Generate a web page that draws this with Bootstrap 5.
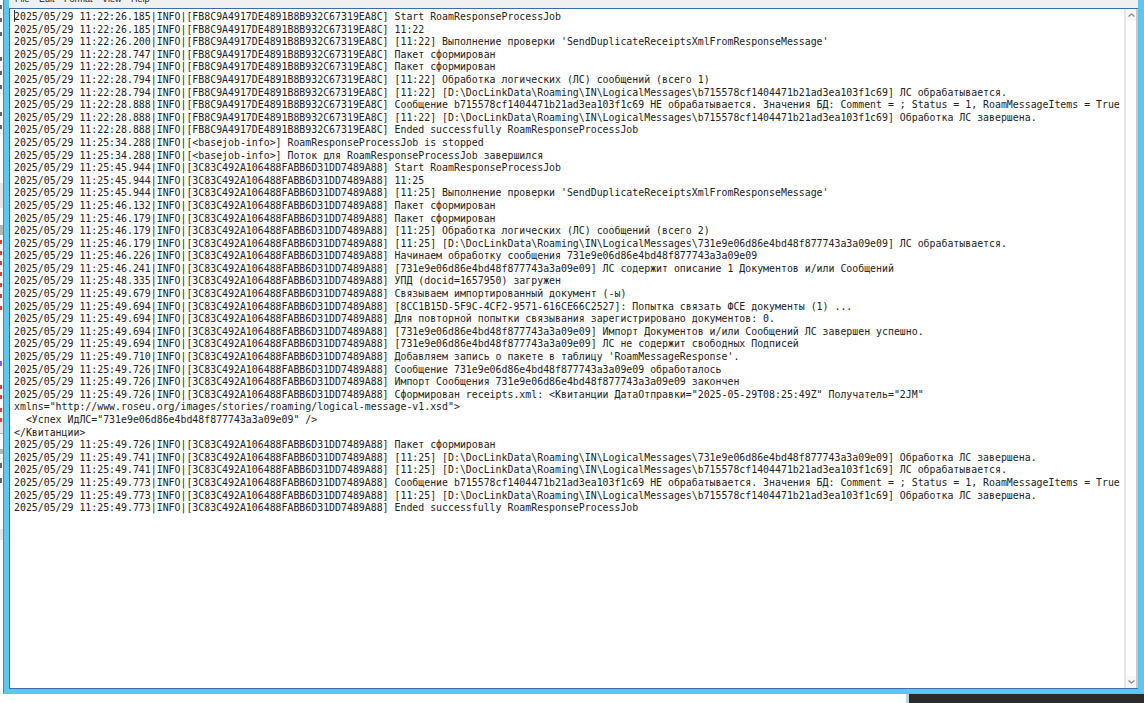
<!doctype html>
<html><head><meta charset="utf-8">
<link href="https://cdn.jsdelivr.net/npm/bootstrap@5.3.0/dist/css/bootstrap.min.css" rel="stylesheet">
<style>
html,body{height:703px;overflow:hidden;background:#fff}
.desk-shell{height:703px}
.frame-row{height:694px}
.behind-strip{width:3px;flex:none}
.note-frame{border-left:1px solid #7a7a7a;border-bottom:1px solid #a8a8a8;background:#5fc6ee;padding:0 6px 4px 5px;min-width:0}
.menu-strip{height:8px;flex:none;background:#f0f0f0;overflow:hidden;font:9px/9px "Liberation Sans",sans-serif;color:#222;padding-left:6px;gap:9.5px}
.menu-strip span{margin-top:-5px}
.edit-pane{border:1px solid #3a6ea5;border-right:0;background:#fff;min-height:0}
.log-text{font:9.9px/12.6px "DejaVu Sans Mono",monospace;color:#222;margin:0;padding:1px 0 0 4px;white-space:pre;overflow:hidden}
.caret-mark{display:inline-block;width:1px;height:12px;margin-right:-1px;background:#333;vertical-align:-2px}
.scroll-rail{width:14px;flex:none;background:#fdfdfd;border-left:2px solid #e6e6e6;border-right:2px solid #c8c8c8}
.scroll-btn{height:12px;background:#f6f6f6;color:#888}
.under-row{height:9px}
.dark-corner{width:238px;background:#2b2b2b;border-left:3px solid #b9d3da}
</style></head><body>
<div class="desk-shell d-flex flex-column">
<div class="frame-row d-flex">
<svg class="behind-strip" width="3" height="694" viewBox="0 0 3 694">
<g fill="#666"><rect y="5" width="2" height="4"/><rect y="18" width="2" height="4"/><rect y="32" width="2" height="4"/><rect y="57" width="2" height="4"/><rect y="71" width="2" height="4"/><rect y="85" width="2" height="4"/><rect y="112" width="2" height="4"/><rect y="125" width="2" height="4"/><rect y="463" width="2" height="5"/><rect y="478" width="2" height="5"/></g>
<g fill="#e8e8e8"><rect y="183" width="3" height="25"/><rect y="418" width="3" height="15"/><rect y="529" width="3" height="11"/></g>
<g fill="#b5b5b5"><rect y="225" width="3" height="10"/><rect y="433" width="3" height="1"/><rect y="449" width="3" height="5"/></g>
<g fill="#e0403a"><rect y="240" width="2" height="4"/><rect y="251" width="2" height="4"/><rect y="261" width="2" height="4"/><rect y="272" width="2" height="4"/><rect y="283" width="2" height="4"/><rect y="294" width="2" height="4"/><rect y="306" width="2" height="4"/><rect y="385" width="2" height="4"/><rect y="395" width="2" height="4"/><rect y="408" width="2" height="4"/><rect y="418" width="2" height="4"/></g>
<rect y="361" width="2" height="5" fill="#8a5ae0"/>
</svg>
<div class="note-frame d-flex flex-column flex-grow-1">
<div class="menu-strip d-flex"><span>File</span><span>Edit</span><span>Format</span><span>View</span><span>Help</span></div>
<div class="edit-pane d-flex flex-grow-1">
<pre class="log-text flex-grow-1"><span class="caret-mark"></span>2025/05/29 11:22:26.185|INFO|[FB8C9A4917DE4891B8B932C67319EA8C] Start RoamResponseProcessJob
2025/05/29 11:22:26.185|INFO|[FB8C9A4917DE4891B8B932C67319EA8C] 11:22
2025/05/29 11:22:26.200|INFO|[FB8C9A4917DE4891B8B932C67319EA8C] [11:22] Выполнение проверки 'SendDuplicateReceiptsXmlFromResponseMessage'
2025/05/29 11:22:28.747|INFO|[FB8C9A4917DE4891B8B932C67319EA8C] Пакет сформирован
2025/05/29 11:22:28.794|INFO|[FB8C9A4917DE4891B8B932C67319EA8C] Пакет сформирован
2025/05/29 11:22:28.794|INFO|[FB8C9A4917DE4891B8B932C67319EA8C] [11:22] Обработка логических (ЛС) сообщений (всего 1)
2025/05/29 11:22:28.794|INFO|[FB8C9A4917DE4891B8B932C67319EA8C] [11:22] [D:\DocLinkData\Roaming\IN\LogicalMessages\b715578cf1404471b21ad3ea103f1c69] ЛС обрабатывается.
2025/05/29 11:22:28.888|INFO|[FB8C9A4917DE4891B8B932C67319EA8C] Сообщение b715578cf1404471b21ad3ea103f1c69 НЕ обрабатывается. Значения БД: Comment = ; Status = 1, RoamMessageItems = True
2025/05/29 11:22:28.888|INFO|[FB8C9A4917DE4891B8B932C67319EA8C] [11:22] [D:\DocLinkData\Roaming\IN\LogicalMessages\b715578cf1404471b21ad3ea103f1c69] Обработка ЛС завершена.
2025/05/29 11:22:28.888|INFO|[FB8C9A4917DE4891B8B932C67319EA8C] Ended successfully RoamResponseProcessJob
2025/05/29 11:25:34.288|INFO|[&lt;basejob-info&gt;] RoamResponseProcessJob is stopped
2025/05/29 11:25:34.288|INFO|[&lt;basejob-info&gt;] Поток для RoamResponseProcessJob завершился
2025/05/29 11:25:45.944|INFO|[3C83C492A106488FABB6D31DD7489A88] Start RoamResponseProcessJob
2025/05/29 11:25:45.944|INFO|[3C83C492A106488FABB6D31DD7489A88] 11:25
2025/05/29 11:25:45.944|INFO|[3C83C492A106488FABB6D31DD7489A88] [11:25] Выполнение проверки 'SendDuplicateReceiptsXmlFromResponseMessage'
2025/05/29 11:25:46.132|INFO|[3C83C492A106488FABB6D31DD7489A88] Пакет сформирован
2025/05/29 11:25:46.179|INFO|[3C83C492A106488FABB6D31DD7489A88] Пакет сформирован
2025/05/29 11:25:46.179|INFO|[3C83C492A106488FABB6D31DD7489A88] [11:25] Обработка логических (ЛС) сообщений (всего 2)
2025/05/29 11:25:46.179|INFO|[3C83C492A106488FABB6D31DD7489A88] [11:25] [D:\DocLinkData\Roaming\IN\LogicalMessages\731e9e06d86e4bd48f877743a3a09e09] ЛС обрабатывается.
2025/05/29 11:25:46.226|INFO|[3C83C492A106488FABB6D31DD7489A88] Начинаем обработку сообщения 731e9e06d86e4bd48f877743a3a09e09
2025/05/29 11:25:46.241|INFO|[3C83C492A106488FABB6D31DD7489A88] [731e9e06d86e4bd48f877743a3a09e09] ЛС содержит описание 1 Документов и/или Сообщений
2025/05/29 11:25:48.335|INFO|[3C83C492A106488FABB6D31DD7489A88] УПД (docid=1657950) загружен
2025/05/29 11:25:49.679|INFO|[3C83C492A106488FABB6D31DD7489A88] Связываем импортированный документ (-ы)
2025/05/29 11:25:49.694|INFO|[3C83C492A106488FABB6D31DD7489A88] [8CC1B15D-5F9C-4CF2-9571-616CE66C2527]: Попытка связать ФСЕ документы (1) ...
2025/05/29 11:25:49.694|INFO|[3C83C492A106488FABB6D31DD7489A88] Для повторной попытки связывания зарегистрировано документов: 0.
2025/05/29 11:25:49.694|INFO|[3C83C492A106488FABB6D31DD7489A88] [731e9e06d86e4bd48f877743a3a09e09] Импорт Документов и/или Сообщений ЛС завершен успешно.
2025/05/29 11:25:49.694|INFO|[3C83C492A106488FABB6D31DD7489A88] [731e9e06d86e4bd48f877743a3a09e09] ЛС не содержит свободных Подписей
2025/05/29 11:25:49.710|INFO|[3C83C492A106488FABB6D31DD7489A88] Добавляем запись о пакете в таблицу 'RoamMessageResponse'.
2025/05/29 11:25:49.726|INFO|[3C83C492A106488FABB6D31DD7489A88] Сообщение 731e9e06d86e4bd48f877743a3a09e09 обработалось
2025/05/29 11:25:49.726|INFO|[3C83C492A106488FABB6D31DD7489A88] Импорт Сообщения 731e9e06d86e4bd48f877743a3a09e09 закончен
2025/05/29 11:25:49.726|INFO|[3C83C492A106488FABB6D31DD7489A88] Сформирован receipts.xml: &lt;Квитанции ДатаОтправки="2025-05-29T08:25:49Z" Получатель="2JM"
xmlns="http://www.roseu.org/images/stories/roaming/logical-message-v1.xsd"&gt;
  &lt;Успех ИдЛС="731e9e06d86e4bd48f877743a3a09e09" /&gt;
&lt;/Квитанции&gt;
2025/05/29 11:25:49.726|INFO|[3C83C492A106488FABB6D31DD7489A88] Пакет сформирован
2025/05/29 11:25:49.741|INFO|[3C83C492A106488FABB6D31DD7489A88] [11:25] [D:\DocLinkData\Roaming\IN\LogicalMessages\731e9e06d86e4bd48f877743a3a09e09] Обработка ЛС завершена.
2025/05/29 11:25:49.741|INFO|[3C83C492A106488FABB6D31DD7489A88] [11:25] [D:\DocLinkData\Roaming\IN\LogicalMessages\b715578cf1404471b21ad3ea103f1c69] ЛС обрабатывается.
2025/05/29 11:25:49.773|INFO|[3C83C492A106488FABB6D31DD7489A88] Сообщение b715578cf1404471b21ad3ea103f1c69 НЕ обрабатывается. Значения БД: Comment = ; Status = 1, RoamMessageItems = True
2025/05/29 11:25:49.773|INFO|[3C83C492A106488FABB6D31DD7489A88] [11:25] [D:\DocLinkData\Roaming\IN\LogicalMessages\b715578cf1404471b21ad3ea103f1c69] Обработка ЛС завершена.
2025/05/29 11:25:49.773|INFO|[3C83C492A106488FABB6D31DD7489A88] Ended successfully RoamResponseProcessJob</pre>
<div class="scroll-rail d-flex flex-column justify-content-between">
<div class="scroll-btn d-flex align-items-center justify-content-center"><svg width="7" height="4" viewBox="0 0 7 4"><path d="M.5 3.5 3.5 1 6.5 3.5" fill="none" stroke="currentColor" stroke-width="1.2"/></svg></div>
<div class="scroll-btn d-flex align-items-center justify-content-center"><svg width="7" height="4" viewBox="0 0 7 4"><path d="M.5 .5 3.5 3 6.5 .5" fill="none" stroke="currentColor" stroke-width="1.2"/></svg></div>
</div>
</div>
</div>
</div>
<div class="under-row d-flex justify-content-end"><div class="dark-corner"></div></div>
</div>
</body></html>
